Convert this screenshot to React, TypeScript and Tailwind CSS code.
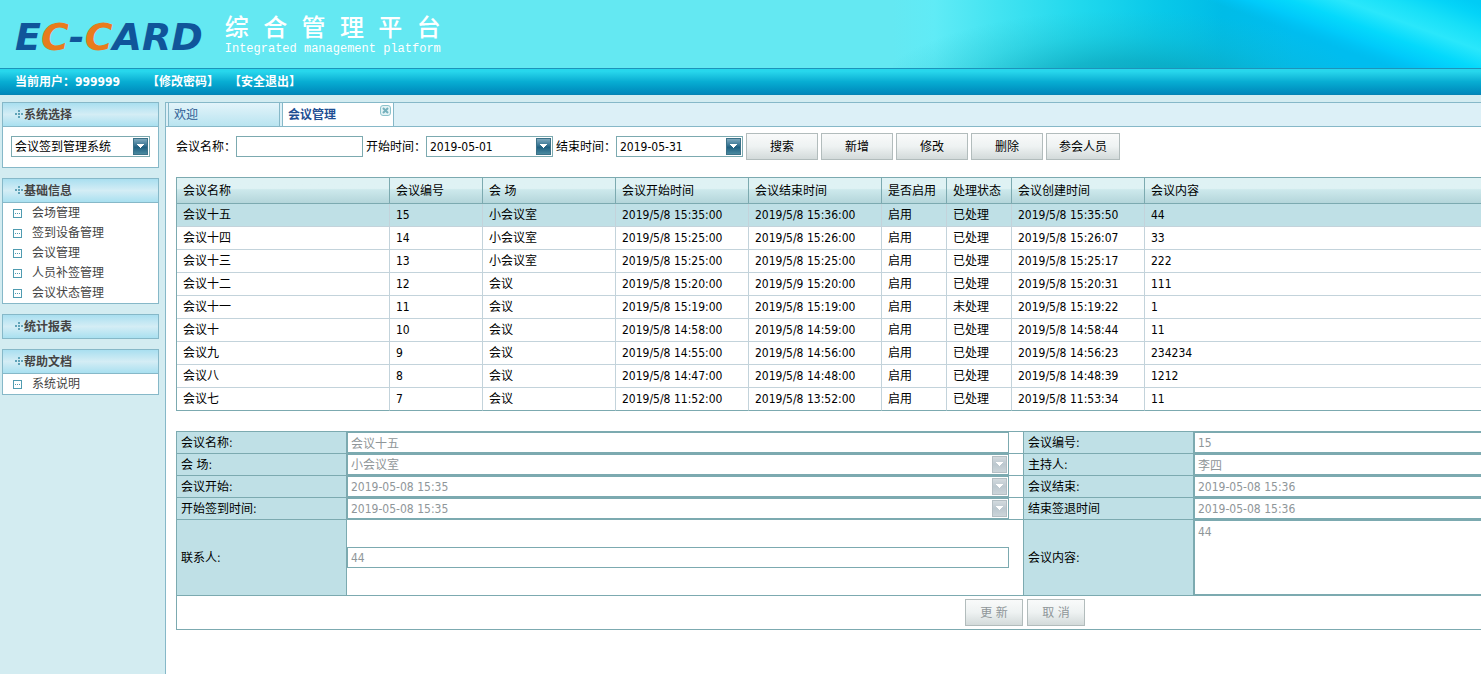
import { useState } from "react";
import type { ReactNode } from "react";

type Meeting = {
  name: string;
  code: string;
  room: string;
  start: string;
  end: string;
  state: string;
  created: string;
  content: string;
};

const meetings: Meeting[] = [
  { name: "会议十五", code: "15", room: "小会议室", start: "2019/5/8 15:35:00", end: "2019/5/8 15:36:00", state: "已处理", created: "2019/5/8 15:35:50", content: "44" },
  { name: "会议十四", code: "14", room: "小会议室", start: "2019/5/8 15:25:00", end: "2019/5/8 15:26:00", state: "已处理", created: "2019/5/8 15:26:07", content: "33" },
  { name: "会议十三", code: "13", room: "小会议室", start: "2019/5/8 15:25:00", end: "2019/5/8 15:25:00", state: "已处理", created: "2019/5/8 15:25:17", content: "222" },
  { name: "会议十二", code: "12", room: "会议", start: "2019/5/8 15:20:00", end: "2019/5/9 15:20:00", state: "已处理", created: "2019/5/8 15:20:31", content: "111" },
  { name: "会议十一", code: "11", room: "会议", start: "2019/5/8 15:19:00", end: "2019/5/8 15:19:00", state: "未处理", created: "2019/5/8 15:19:22", content: "1" },
  { name: "会议十", code: "10", room: "会议", start: "2019/5/8 14:58:00", end: "2019/5/8 14:59:00", state: "已处理", created: "2019/5/8 14:58:44", content: "11" },
  { name: "会议九", code: "9", room: "会议", start: "2019/5/8 14:55:00", end: "2019/5/8 14:56:00", state: "已处理", created: "2019/5/8 14:56:23", content: "234234" },
  { name: "会议八", code: "8", room: "会议", start: "2019/5/8 14:47:00", end: "2019/5/8 14:48:00", state: "已处理", created: "2019/5/8 14:48:39", content: "1212" },
  { name: "会议七", code: "7", room: "会议", start: "2019/5/8 11:52:00", end: "2019/5/8 13:52:00", state: "已处理", created: "2019/5/8 11:53:34", content: "11" },
];

const columns = [
  { title: "会议名称", width: "w-[213px]" },
  { title: "会议编号", width: "w-[93px]" },
  { title: "会 场", width: "w-[133px]" },
  { title: "会议开始时间", width: "w-[133px]" },
  { title: "会议结束时间", width: "w-[133px]" },
  { title: "是否启用", width: "w-[65px]" },
  { title: "处理状态", width: "w-[65px]" },
  { title: "会议创建时间", width: "w-[133px]" },
  { title: "会议内容", width: "" },
];

export default function App() {
  return (
    <div className="flex min-h-screen flex-col overflow-hidden bg-[#d3ecf1] font-['DejaVu_Sans_Condensed','Noto_Sans_CJK_SC',sans-serif] text-xs text-black">
      <Banner />
      <div className="flex flex-1 gap-[6px] pt-[7px] pl-[2px]">
        <Sidebar />
        <main className="min-w-0 flex-1 overflow-hidden border-t border-l border-[#86b8c8] bg-white">
          <TabStrip />
          <div className="pt-[6px] pl-[10px]">
            <FilterBar />
            <MeetingTable />
            <MeetingForm />
          </div>
        </main>
      </div>
    </div>
  );
}

function Banner() {
  return (
    <header>
      <div className="relative flex h-[68px] overflow-hidden bg-[#64e8f2] pl-[15px]">
        <BannerArt />
        <div className="relative flex gap-[22px]">
          <div className="pt-[13px] font-['DejaVu_Sans',sans-serif] text-[38px] leading-[48px] font-bold whitespace-nowrap text-[#10559a] italic">
            E<span className="text-[#e87b1c]">C</span>-<span className="text-[#e87b1c]">C</span>ARD
          </div>
          <div className="pt-[17px] font-['Liberation_Mono','Noto_Sans_CJK_SC',monospace] whitespace-nowrap text-white">
            <h1 className="text-2xl leading-[26px] font-medium">综 合 管 理 平 台</h1>
            <p className="text-xs leading-[12px]">Integrated management platform</p>
          </div>
        </div>
      </div>
      <nav className="flex h-[27px] items-center border-t border-b border-t-[#1d93bb] border-b-[#0584b4] bg-linear-to-b from-[#27d6ec] from-10% via-[#08aed3] via-50% to-[#0088bb] pl-[15px] font-bold text-white">
        <span className="w-[132px]">当前用户：999999</span>
        <a href="#password" className="w-[82px]">【修改密码】</a>
        <a href="#logout">【安全退出】</a>
      </nav>
    </header>
  );
}

function BannerArt() {
  return (
    <svg className="absolute top-0 right-0 h-[68px] w-[588px]" viewBox="0 0 588 68" preserveAspectRatio="none" aria-hidden="true">
      <defs>
        <linearGradient id="sea" x1="0" x2="1" y1="0" y2="0">
          <stop offset="0" stopColor="#64e8f2" />
          <stop offset="0.07" stopColor="#60ebf6" />
          <stop offset="0.18" stopColor="#42e3f1" />
          <stop offset="0.32" stopColor="#20d8ed" />
          <stop offset="0.46" stopColor="#08c8e9" />
          <stop offset="0.56" stopColor="#00bce7" />
          <stop offset="0.68" stopColor="#00bdef" />
          <stop offset="1" stopColor="#00bdef" />
        </linearGradient>
        <radialGradient id="shade" gradientUnits="userSpaceOnUse" cx="0" cy="0" r="1" gradientTransform="translate(230 95) scale(250 85)">
          <stop offset="0" stopColor="#0898b0" stopOpacity="0.85" />
          <stop offset="0.4" stopColor="#0c9fb4" stopOpacity="0.6" />
          <stop offset="0.7" stopColor="#16aebe" stopOpacity="0.25" />
          <stop offset="1" stopColor="#20b8c4" stopOpacity="0" />
        </radialGradient>
        <linearGradient id="ray" gradientUnits="userSpaceOnUse" x1="312" y1="0" x2="343" y2="-85">
          <stop offset="0" stopColor="#00c4f6" stopOpacity="0" />
          <stop offset="0.16" stopColor="#00cafa" />
          <stop offset="0.32" stopColor="#04d9fc" />
          <stop offset="0.52" stopColor="#2ae7fb" />
          <stop offset="0.7" stopColor="#18e0f8" />
          <stop offset="0.88" stopColor="#04d4f8" />
          <stop offset="1" stopColor="#00ccf6" />
        </linearGradient>
      </defs>
      <rect width="588" height="68" fill="url(#sea)" />
      <rect width="588" height="68" fill="url(#shade)" />
      <rect width="588" height="68" fill="url(#ray)" />
    </svg>
  );
}

function Sidebar() {
  return (
    <aside className="flex w-[157px] shrink-0 flex-col gap-[10px]">
      <Panel title="系统选择">
        <div className="px-2 pt-[9px] pb-[10px]">
          <Combo label="系统选择" options={["会议签到管理系统"]} />
        </div>
      </Panel>
      <Panel title="基础信息">
        <MenuList items={["会场管理", "签到设备管理", "会议管理", "人员补签管理", "会议状态管理"]} />
      </Panel>
      <Panel title="统计报表" />
      <Panel title="帮助文档">
        <MenuList items={["系统说明"]} />
      </Panel>
    </aside>
  );
}

function Panel({ title, children }: { title: string; children?: ReactNode }) {
  return (
    <section className="border border-[#86b8c8] bg-white">
      <h2 className="flex h-[23px] items-center bg-linear-to-b from-[#a9dff0] via-[#d4edf5] to-[#a9e0f0] pl-3 font-bold text-[#444]">
        <svg className="h-[9px] w-[9px]" viewBox="0 0 9 9" fill="#5fa3b8" shapeRendering="crispEdges" aria-hidden="true">
          <path d="M3 0h2v2h-2zM0 3h2v2h-2zM3 3h2v2h-2zM6 3h2v2h-2zM3 6h2v2h-2z" />
        </svg>
        {title}
      </h2>
      {children && <div className="border-t border-[#86b8c8]">{children}</div>}
    </section>
  );
}

function MenuList({ items }: { items: string[] }) {
  return (
    <ul>
      {items.map((item) => (
        <li key={item} className="flex h-5 items-center gap-[10px] pl-[10px]">
          <svg className="h-[9px] w-[9px]" viewBox="0 0 9 9" shapeRendering="crispEdges" aria-hidden="true">
            <path d="M0 0h9v9h-9zM1 1v7h7v-7z" fill="#4f9bb0" fillRule="evenodd" />
            <path d="M2 4h1v1h-1zM4 4h1v1h-1zM6 4h1v1h-1z" fill="#4f9bb0" />
          </svg>
          <a href={`#${item}`} className="text-[#444]">{item}</a>
        </li>
      ))}
    </ul>
  );
}

function TabStrip() {
  return (
    <div className="flex h-6 gap-[2px] border-b border-[#86b8c8] bg-[#dcf0f7] pl-[2px]">
      <button type="button" className="flex w-28 items-center border-x border-[#86b8c8] bg-linear-to-b from-[#e3f4fa] to-[#b9e4f0] pl-[5px] text-[#2c5a92]">
        欢迎
      </button>
      <div className="relative flex w-28 items-center border-x border-[#86b8c8] bg-white pl-[5px]">
        <button type="button" className="font-bold text-[#1f4f93]">会议管理</button>
        <button type="button" aria-label="关闭" className="absolute top-[2px] right-[2px]">
          <svg className="h-[11px] w-[11px]" viewBox="0 0 11 11" aria-hidden="true">
            <rect x="0.5" y="0.5" width="10" height="10" rx="2.5" fill="#e3f3f5" stroke="#8cc3cc" />
            <path d="M3 3l5 5M8 3l-5 5" stroke="#76b0bc" strokeWidth="2" />
          </svg>
        </button>
      </div>
    </div>
  );
}

function Combo({ label, options, disabled, id }: { label?: string; options: string[]; disabled?: boolean; id?: string }) {
  return (
    <div className="relative w-full">
      <select
        id={id}
        aria-label={label}
        disabled={disabled}
        className="block h-[21px] w-full appearance-none border border-[#7caab0] bg-white pr-4 pl-[3px] text-black disabled:text-[#8f9699] disabled:opacity-100"
      >
        {options.map((o) => <option key={o}>{o}</option>)}
      </select>
      <ComboArrow disabled={disabled} />
    </div>
  );
}

function ComboArrow({ disabled }: { disabled?: boolean }) {
  return (
    <svg className="pointer-events-none absolute top-[2px] right-[2px] h-[17px] w-[15px]" viewBox="0 0 15 17" shapeRendering="crispEdges" aria-hidden="true">
      <defs>
        <linearGradient id="arrowOn" x1="0" x2="0" y1="0" y2="1">
          <stop offset="0" stopColor="#7fa9be" />
          <stop offset="0.45" stopColor="#33708f" />
          <stop offset="0.55" stopColor="#1f5f80" />
          <stop offset="1" stopColor="#4a8aa0" />
        </linearGradient>
        <linearGradient id="arrowOff" x1="0" x2="0" y1="0" y2="1">
          <stop offset="0" stopColor="#d3dade" />
          <stop offset="0.5" stopColor="#bcc8cf" />
          <stop offset="1" stopColor="#ccd5da" />
        </linearGradient>
      </defs>
      <rect width="15" height="17" fill={disabled ? "#b5bfc4" : "#3c7288"} />
      <rect x="1" y="1" width="13" height="15" fill={disabled ? "url(#arrowOff)" : "url(#arrowOn)"} />
      <path d="M4 6h7v1h-1v1h-1v1h-1v1h-1v-1h-1v-1h-1v-1h-1z" fill="#fff" />
    </svg>
  );
}

const buttonClass =
  "h-[27px] border border-[#b2bcbc] bg-linear-to-b from-[#f9fafa] from-0% via-[#eef2f2] via-50% to-[#d3dada] to-100% text-center whitespace-pre";

function FilterBar() {
  const [name, setName] = useState("");

  return (
    <form className="flex items-center gap-[3px]" onSubmit={(e) => e.preventDefault()}>
      <div className="flex items-center">
        <label htmlFor="q-name" className="w-[60px]">会议名称：</label>
        <input
          id="q-name"
          value={name}
          onChange={(e) => setName(e.target.value)}
          className="h-[21px] w-[127px] border border-[#7caab0] bg-white px-[3px]"
        />
      </div>
      <div className="flex items-center">
        <label htmlFor="q-start" className="w-[60px]">开始时间：</label>
        <div className="w-[127px]"><Combo id="q-start" options={["2019-05-01"]} /></div>
      </div>
      <div className="flex items-center">
        <label htmlFor="q-end" className="w-[60px]">结束时间：</label>
        <div className="w-[127px]"><Combo id="q-end" options={["2019-05-31"]} /></div>
      </div>
      <button type="submit" className={`${buttonClass} w-[72px]`}>搜索</button>
      <button type="button" className={`${buttonClass} w-[72px]`}>新增</button>
      <button type="button" className={`${buttonClass} w-[72px]`}>修改</button>
      <button type="button" className={`${buttonClass} w-[72px]`}>删除</button>
      <button type="button" className={`${buttonClass} w-[74px]`}>参会人员</button>
    </form>
  );
}

function MeetingTable() {
  const [selected, setSelected] = useState("15");
  const cell = "border-r border-b border-[#c3d3db] px-[6px] whitespace-nowrap";

  return (
    <table className="mt-[17px] w-[1697px] table-fixed border-separate border-spacing-0 border-t border-l border-[#7caab0] text-left">
      <thead>
        <tr className="h-[26px] bg-linear-to-b from-[#dff2f4] from-40% via-[#cde9ec] via-45% to-[#b2d4d9]">
          {columns.map((c) => (
            <th key={c.title} className={`${c.width} border-r border-b border-[#7caab0] px-[6px] font-normal whitespace-nowrap`}>
              {c.title}
            </th>
          ))}
        </tr>
      </thead>
      <tbody className="[&>tr:last-child>td]:border-b-[#7caab0]">
        {meetings.map((m) => (
          <tr
            key={m.code}
            onClick={() => setSelected(m.code)}
            className={m.code === selected ? "h-[23px] bg-[#bfe0e6]" : "h-[23px]"}
          >
            <td className={cell}>{m.name}</td>
            <td className={cell}>{m.code}</td>
            <td className={cell}>{m.room}</td>
            <td className={cell}>{m.start}</td>
            <td className={cell}>{m.end}</td>
            <td className={cell}>启用</td>
            <td className={cell}>{m.state}</td>
            <td className={cell}>{m.created}</td>
            <td className={cell}>{m.content}</td>
          </tr>
        ))}
      </tbody>
    </table>
  );
}

function FieldLabel({ id, children }: { id: string; children: string }) {
  return (
    <label htmlFor={id} className="flex items-center border-r border-b border-[#7caab0] bg-[#bfe0e6] pl-1">
      {children}
    </label>
  );
}

function Field({ children, divider }: { children: ReactNode; divider?: boolean }) {
  return (
    <div className={divider ? "flex items-center border-r border-b border-[#7caab0] pr-[14px]" : "flex items-center border-b border-[#7caab0] pr-[14px]"}>
      {children}
    </div>
  );
}

function MeetingForm() {
  const input = "h-[21px] w-full border border-[#7caab0] bg-white px-[3px] text-[#8f9699]";

  return (
    <form className="mt-5 w-[1697px] border-t border-l border-[#7caab0]" onSubmit={(e) => e.preventDefault()}>
      <div className="grid grid-cols-[170px_677px_170px_1fr] grid-rows-[22px_22px_22px_22px_76px]">
        <FieldLabel id="f-name">会议名称:</FieldLabel>
        <Field divider><input id="f-name" className={input} defaultValue="会议十五" disabled /></Field>
        <FieldLabel id="f-code">会议编号:</FieldLabel>
        <Field><input id="f-code" className={input} defaultValue="15" disabled /></Field>

        <FieldLabel id="f-room">会 场:</FieldLabel>
        <Field divider><Combo id="f-room" options={["小会议室"]} disabled /></Field>
        <FieldLabel id="f-host">主持人:</FieldLabel>
        <Field><input id="f-host" className={input} defaultValue="李四" disabled /></Field>

        <FieldLabel id="f-start">会议开始:</FieldLabel>
        <Field divider><Combo id="f-start" options={["2019-05-08 15:35"]} disabled /></Field>
        <FieldLabel id="f-end">会议结束:</FieldLabel>
        <Field><Combo id="f-end" options={["2019-05-08 15:36"]} disabled /></Field>

        <FieldLabel id="f-signin">开始签到时间:</FieldLabel>
        <Field divider><Combo id="f-signin" options={["2019-05-08 15:35"]} disabled /></Field>
        <FieldLabel id="f-signout">结束签退时间</FieldLabel>
        <Field><Combo id="f-signout" options={["2019-05-08 15:36"]} disabled /></Field>

        <FieldLabel id="f-contact">联系人:</FieldLabel>
        <Field divider><input id="f-contact" className={input} defaultValue="44" disabled /></Field>
        <FieldLabel id="f-content">会议内容:</FieldLabel>
        <Field>
          <textarea id="f-content" className="h-[75px] w-full resize-none border border-[#7caab0] bg-white px-[3px] py-[3px] text-[#8f9699]" defaultValue="44" disabled />
        </Field>
      </div>
      <div className="flex h-[34px] items-center justify-center gap-1 border-b border-[#7caab0]">
        <button type="submit" disabled className={`${buttonClass} w-[58px] text-[#8f9699]`}>更 新</button>
        <button type="button" disabled className={`${buttonClass} w-[58px] text-[#8f9699]`}>取 消</button>
      </div>
    </form>
  );
}
